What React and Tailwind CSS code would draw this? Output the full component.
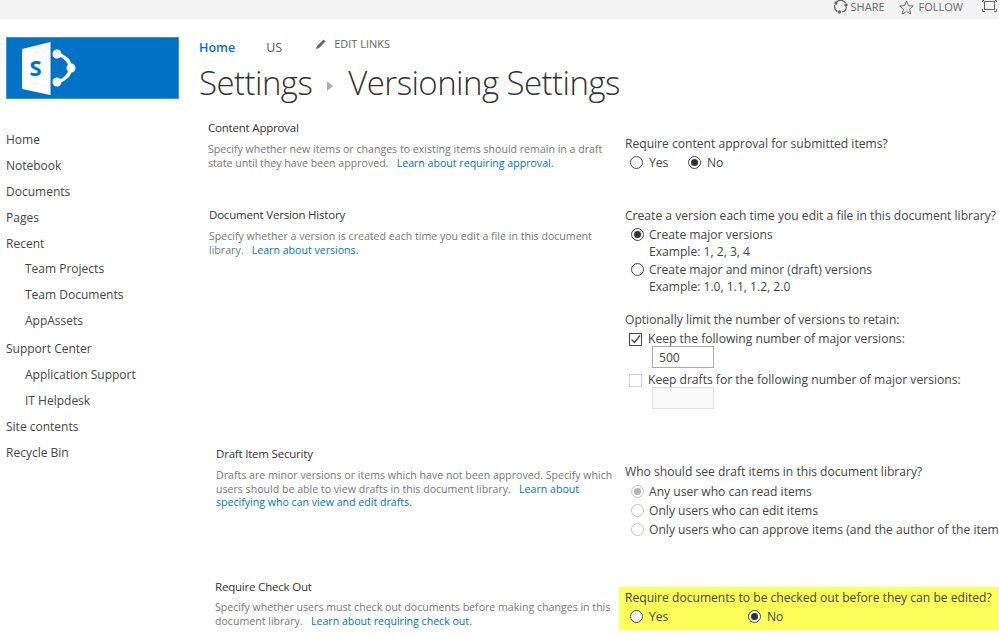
const font = { fontFamily: '"Open Sans", "Noto Sans", sans-serif' };

function Radio({ checked, dim }) {
  return (
    <span className={`inline-flex items-center justify-center w-[13px] h-[13px] rounded-full border bg-white shrink-0 ${dim ? "border-[#c4c4c4]" : "border-[#444]"}`}>
      {checked && <span className={`w-[7px] h-[7px] rounded-full ${dim ? "bg-[#b5b5b5]" : "bg-[#333]"}`} />}
    </span>
  );
}

function Desc({ children, className = "" }) {
  return <p className={`text-[10.6px] leading-[13.5px] text-[#777] ${className}`}>{children}</p>;
}

function A({ children }) {
  return <a className="text-[#0072c6]">{children}</a>;
}

function Section({ ml, width, title, mt, children, right, rightMt = "" }) {
  return (
    <div className={`flex ${mt}`}>
      <div className={`shrink-0 ${ml} ${width}`}>
        <h3 className="text-[11.5px] leading-[16px] text-[#333] tracking-[-0.2px] mb-[7px]">{title}</h3>
        {children}
      </div>
      <div className={`text-[12.1px] text-[#444] whitespace-nowrap ${rightMt}`}>{right}</div>
    </div>
  );
}

const nav = [
  ["Home", ""], ["Notebook", ""], ["Documents", ""], ["Pages", ""], ["Recent", ""],
  ["Team Projects", "pl-[19px] -mt-[1px]"], ["Team Documents", "pl-[19px]"], ["AppAssets", "pl-[19px]"],
  ["Support Center", "mt-[2px]"], ["Application Support", "pl-[19px]"], ["IT Helpdesk", "pl-[19px]"],
  ["Site contents", ""], ["Recycle Bin", ""],
];

function Logo() {
  return (
    <div className="w-[173px] h-[62px] bg-[#0072c6] border border-[#3f95d6] flex items-center pl-[9px]">
      <svg width="60" height="60" viewBox="0 1 60 60">
        <polygon points="6,12 34.5,5 34.5,58 6,52" fill="#fff" />
        <text x="19.5" y="39" textAnchor="middle" fontSize="22" fontWeight="700" fill="#0072c6" fontFamily="Open Sans, sans-serif">S</text>
        <path d="M41 17 Q53 20 55 31 Q53 42 41 45" fill="none" stroke="#fff" strokeWidth="3.5" />
        <circle cx="41" cy="17" r="4.5" fill="#fff" />
        <circle cx="55" cy="31" r="4.5" fill="#fff" />
        <circle cx="41" cy="45" r="4.5" fill="#fff" />
      </svg>
    </div>
  );
}

export default function App() {
  return (
    <div style={font} className="w-[999px] h-[637px] overflow-hidden bg-white relative">
      <div className="h-[19px] bg-[#f3f3f3] flex items-start justify-end text-[11px] leading-[13px] text-[#666] whitespace-nowrap overflow-hidden">
        <svg width="15" height="15" viewBox="0 0 15 15" className="mr-[3px] -mt-[1px]">
          <path d="M4 2.5 A6 6 0 0 1 12.5 4 M13.4 8 A6 6 0 0 1 9 13.2 M4.5 12.6 A6 6 0 0 1 1.8 6" fill="none" stroke="#666" strokeWidth="1.3" />
          <circle cx="3" cy="4" r="1.7" fill="#666" /><circle cx="13" cy="6" r="1.7" fill="#666" /><circle cx="6.5" cy="13" r="1.7" fill="#666" />
        </svg>
        <span className="mr-[14px]">SHARE</span>
        <svg width="15" height="15" viewBox="0 0 15 15" className="mr-[5px]">
          <polygon points="7.5,1 9.4,5.6 14.3,6 10.6,9.2 11.7,14 7.5,11.4 3.3,14 4.4,9.2 0.7,6 5.6,5.6" fill="none" stroke="#666" />
        </svg>
        <span className="mr-[19px]">FOLLOW</span>
        <svg width="15" height="13" viewBox="0 0 15 13" className="mr-[2px] shrink-0">
          <rect x="2.5" y="1.5" width="10" height="8" fill="none" stroke="#666" />
          <path d="M0.5 2 V0.5 H2 M13 0.5 H14.5 V2 M0.5 9 V11.5 H3 M12 11.5 H14.5 V9" fill="none" stroke="#666" />
        </svg>
      </div>

      <div className="flex">
        <aside className="w-[199px] shrink-0 pl-[6px] pt-[18px]">
          <Logo />
          <nav className="mt-[28px] text-[12px] text-[#444]">
            {nav.map(([t, cls]) => (
              <div key={t} className={`h-[26px] leading-[26px] ${cls}`}>{t}</div>
            ))}
          </nav>
        </aside>

        <main className="flex-1 min-w-0">
          <div className="flex items-start h-[38px] text-[12.5px]">
            <span className="text-[#0072c6] font-semibold leading-[18px] mt-[20px]">Home</span>
            <span className="ml-[31px] text-[#555] leading-[18px] mt-[20px]">US</span>
            <span className="ml-[33px] flex items-center text-[11px] text-[#666] leading-[15px] mt-[17px]">
              <svg width="12" height="12" viewBox="0 0 12 12" className="mr-[7px]">
                <path d="M1 11 L2 8 L8.5 1.5 L10.5 3.5 L4 10 Z" fill="#666" />
              </svg>
              EDIT LINKS
            </span>
          </div>
          <h1 className="mt-[4px] h-[44px] flex items-center text-[33px] leading-[44px] font-light text-[#333] tracking-[-0.55px] whitespace-nowrap">
            Settings
            <svg width="6" height="10" viewBox="0 0 6 10" className="ml-[15px] mr-[15px] mt-[6px]"><polygon points="0,0 6,5 0,10" fill="#b0b0b0" /></svg>
            Versioning Settings
          </h1>

          <Section ml="ml-[9px]" width="w-[417px]" mt="mt-[15px]" title="Content Approval" rightMt="mt-[15px]"
            right={<>
              <div className="leading-[18px]">Require content approval for submitted items?</div>
              <div className="flex items-center ml-[5px] leading-[19px] gap-[6px]">
                <Radio /><span className="w-[33px]">Yes</span><Radio checked /><span>No</span>
              </div>
            </>}>
            <Desc>Specify whether new items or changes to existing items should remain in a draft state until they have been approved. &nbsp; <A>Learn about requiring approval.</A></Desc>
          </Section>

          <Section ml="ml-[10px]" width="w-[416px]" mt="mt-[35px]" title="Document Version History" rightMt="mt-[0px]"
            right={<>
              <div className="leading-[18px]">Create a version each time you edit a file in this document library?</div>
              <div className="ml-[6px] mt-[1px] flex items-center gap-[5px] leading-[17px]"><Radio checked />Create major versions</div>
              <div className="ml-[24px] leading-[17px]">Example: 1, 2, 3, 4</div>
              <div className="ml-[6px] mt-[1px] flex items-center gap-[5px] leading-[17px]"><Radio />Create major and minor (draft) versions</div>
              <div className="ml-[24px] leading-[17px]">Example: 1.0, 1.1, 1.2, 2.0</div>
              <div className="mt-[16px] leading-[17px]">Optionally limit the number of versions to retain:</div>
              <div className="ml-[4px] mt-[2px] flex items-center gap-[6px] leading-[18px]">
                <span className="w-[13px] h-[13px] border border-[#444] flex items-center justify-center">
                  <svg width="11" height="11" viewBox="0 0 11 11"><path d="M1.5 5.5 L4.5 8.5 L10 1.5" fill="none" stroke="#444" strokeWidth="1.3" /></svg>
                </span>
                Keep the following number of major versions:
              </div>
              <div className="ml-[27px] -mt-[2px] w-[62px] h-[22px] border border-[#ababab] px-[6px] leading-[21px]">500</div>
              <div className="ml-[4px] mt-[3px] flex items-center gap-[6px] leading-[18px]">
                <span className="w-[13px] h-[13px] border border-[#d0d0d0]" />
                Keep drafts for the following number of major versions:
              </div>
              <div className="ml-[27px] -mt-[2px] w-[62px] h-[22px] border border-[#e1e1e1] bg-[#fafafa]" />
            </>}>
            <Desc>Specify whether a version is created each time you edit a file in this document library. &nbsp; <A>Learn about versions.</A></Desc>
          </Section>

          <Section ml="ml-[17px]" width="w-[409px]" mt="mt-[37px]" title="Draft Item Security" rightMt="mt-[17px]"
            right={<>
              <div className="leading-[18px]">Who should see draft items in this document library?</div>
              <div className="ml-[6px] mt-[1px] flex items-center gap-[5px] leading-[19px]"><Radio checked dim />Any user who can read items</div>
              <div className="ml-[6px] flex items-center gap-[5px] leading-[19px]"><Radio dim />Only users who can edit items</div>
              <div className="ml-[6px] flex items-center gap-[5px] leading-[19px]"><Radio dim />Only users who can approve items (and the author of the item)</div>
            </>}>
            <Desc className="w-[400px] mt-[1px]">Drafts are minor versions or items which have not been approved. Specify which users should be able to view drafts in this document library. &nbsp; <A>Learn about specifying who can view and edit drafts.</A></Desc>
          </Section>

          <Section ml="ml-[16px]" width="w-[404px]" mt="mt-[40px]" title="Require Check Out" rightMt="mt-[8px]"
            right={<div className="bg-[#ffff5a] w-[380px] h-[43px] pl-[6px] pt-[2px]">
              <div className="leading-[18px]">Require documents to be checked out before they can be edited?</div>
              <div className="flex items-center ml-[5px] leading-[19px] gap-[6px]">
                <Radio /><span className="w-[93px]">Yes</span><Radio checked /><span>No</span>
              </div>
            </div>}>
            <Desc className="w-[400px] -mt-[1px]">Specify whether users must check out documents before making changes in this document library. &nbsp; <A>Learn about requiring check out.</A></Desc>
          </Section>
        </main>
      </div>
    </div>
  );
}
